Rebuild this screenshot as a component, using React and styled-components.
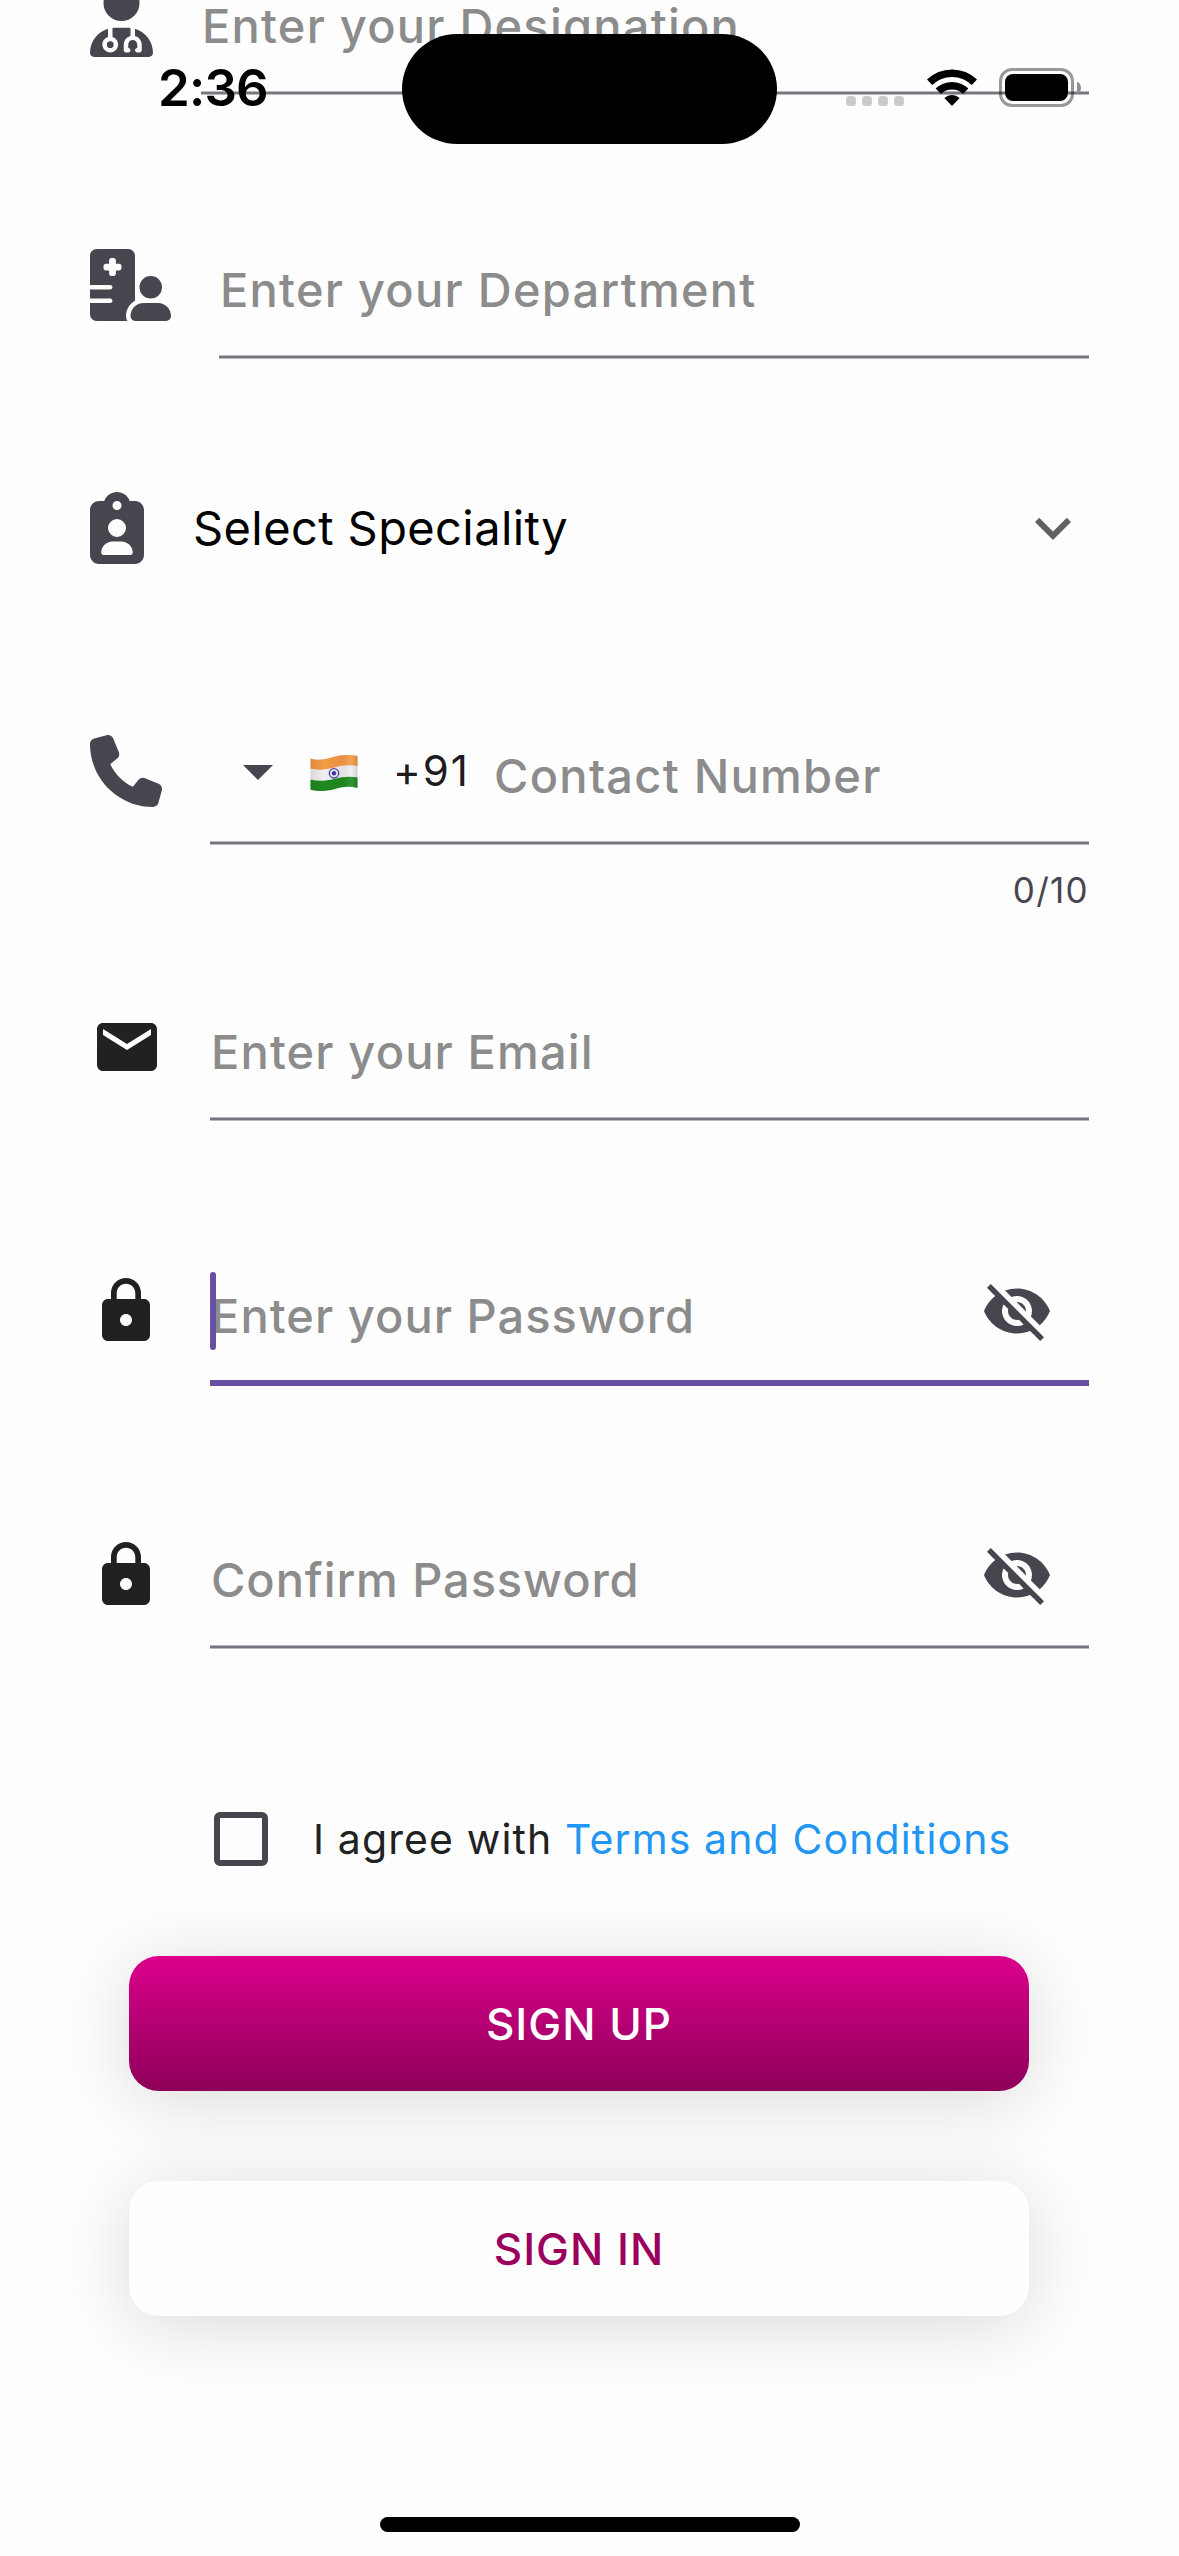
import React from "react";
import styled, { createGlobalStyle } from "styled-components";
import { FaUserDoctor, FaHospitalUser, FaClipboardUser, FaPhone } from "react-icons/fa6";
import {
  MdEmail,
  MdLock,
  MdVisibilityOff,
  MdKeyboardArrowDown,
  MdArrowDropDown,
} from "react-icons/md";

const GlobalStyle = createGlobalStyle`
  * { box-sizing: border-box; }
  body { margin: 0; background: #fefefe; }
`;

const Screen = styled.main`
  position: relative;
  width: 1179px;
  height: 2556px;
  overflow: hidden;
  background: #fefefe;
  font-family: Inter, "Liberation Sans", sans-serif;
  color: #212121;
`;

const Form = styled.form`
  display: flex;
  flex-direction: column;
  margin-top: -15px;
  padding: 0 90px;
`;

const Row = styled.div`
  display: flex;
  align-items: flex-start;
  gap: 48px;
  height: ${(p) => p.$height || 110}px;
  margin-top: ${(p) => p.$gap || 0}px;
`;

const Glyph = styled.span`
  display: flex;
  flex: none;
  width: ${(p) => p.$width || 72}px;
  height: 72px;
  margin: 0 ${(p) => -(p.$nudge || 0)}px 0 ${(p) => p.$nudge || 0}px;
  color: ${(p) => p.$color || "#49454f"};

  svg {
    width: 100%;
    height: 100%;
  }
`;

const Field = styled.div`
  position: relative;
  display: flex;
  flex: 1;
  align-items: flex-start;
  height: 100%;
`;

const Underline = styled.i`
  position: absolute;
  left: 0;
  right: 0;
  bottom: 0;
  height: ${(p) => (p.$focused ? 6 : 4)}px;
  background: ${(p) => (p.$focused ? "#6750a4" : "#79747e")};
  background-clip: padding-box;
  border: solid rgba(121, 116, 126, 0.5);
  border-width: ${(p) => (p.$focused ? "0" : "1px 0")};
`;

const Hint = styled.span`
  flex: 1;
  margin-top: 12px;
  padding-left: 1px;
  font-size: 47px;
  font-weight: 450;
  line-height: 58px;
  letter-spacing: ${(p) => p.$spacing}px;
  color: #8c8c8c;
  white-space: nowrap;
`;

const Caret = styled.i`
  position: absolute;
  left: 0;
  top: -3px;
  width: 6px;
  height: 78px;
  border-radius: 3px;
  background: #6750a4;
`;

const EyeButton = styled.span`
  display: flex;
  margin-right: 36px;
`;

const SelectText = styled.span`
  flex: 1;
  padding-left: 1px;
  font-size: 47px;
  line-height: 72px;
  letter-spacing: 0.4px;
  color: #000;
`;

const Prefix = styled.div`
  display: flex;
  align-items: center;
  height: 72px;
  padding-left: 12px;
  margin-right: 27px;
`;

const FlagIcon = styled.svg`
  width: 48px;
  height: 36px;
  margin: 3px 35px 0 16px;
`;

const DialCode = styled.span`
  width: 73px;
  font-size: 42px;
  line-height: 72px;
  letter-spacing: 2px;
  color: #1d1b20;
  white-space: nowrap;
`;

const Counter = styled.div`
  margin-top: 24px;
  font-size: 35px;
  line-height: 42px;
  letter-spacing: 1.3px;
  text-align: right;
  color: #49454f;
`;

const Agreement = styled.label`
  display: flex;
  align-items: center;
  height: 54px;
  margin: 163px 0 0 124px;
  font-size: 41px;
  letter-spacing: 1.12px;
  white-space: pre;
`;

const Box = styled.span`
  width: 54px;
  height: 54px;
  margin-right: 45px;
  border: 6px solid #49454f;
  border-radius: 6px;
`;

const Terms = styled.a`
  color: #2196f3;
`;

const Actions = styled.div`
  display: flex;
  flex-direction: column;
  gap: 90px;
  margin: 90px 60px 0 39px;
`;

const Button = styled.button`
  height: 135px;
  padding: 0;
  border: 0;
  border-radius: 30px;
  background: ${(p) =>
    p.$primary ? "linear-gradient(180deg, #dd008c 0%, #8c0058 100%)" : "#fefefe"};
  box-shadow: 0 9px 76px rgba(0, 0, 0, 0.15);
  color: ${(p) => (p.$primary ? "#ffffff" : "#9c005d")};
  font-family: inherit;
  font-size: 44px;
  font-weight: 450;
  letter-spacing: 1px;
`;

const StatusBar = styled.header`
  position: absolute;
  top: 34px;
  left: 0;
  right: 0;
  display: flex;
  align-items: center;
  height: 110px;
  padding: 0 98px 0 158px;
`;

const Clock = styled.time`
  width: 244px;
  margin-top: -2px;
  font-size: 51px;
  font-weight: 600;
  line-height: 60px;
  letter-spacing: -0.8px;
  color: #000;
`;

const Island = styled.div`
  width: 375px;
  height: 110px;
  border-radius: 55px;
  background: #000;
`;

const Indicators = styled.div`
  display: flex;
  flex: 1;
  align-items: center;
  justify-content: flex-end;
  margin-top: -3px;
`;

const Signal = styled.span`
  display: flex;
  gap: 6px;
  margin: 27px 23px 0 0;

  i {
    width: 10px;
    height: 10px;
    border-radius: 3.5px;
    background: #cbcbcb;
  }
`;

const WifiIcon = styled.svg`
  width: 50px;
  height: 37px;
  margin-right: 22px;
`;

const Battery = styled.span`
  width: 75px;
  height: 39px;
  padding: 3px;
  border: 3px solid rgba(0, 0, 0, 0.4);
  border-radius: 13px;

  &::before {
    content: "";
    display: block;
    height: 100%;
    border-radius: 8px;
    background: #000;
  }
`;

const BatteryTip = styled.span`
  width: 4px;
  height: 12px;
  margin-left: 3px;
  border-radius: 0 4px 4px 0 / 0 6px 6px 0;
  background: #8f8f8f;
`;

const HomeIndicator = styled.div`
  position: absolute;
  left: 380px;
  bottom: 24px;
  width: 420px;
  height: 15px;
  border-radius: 7.5px;
  background: #000;
`;

function IndiaFlag() {
  return (
    <FlagIcon viewBox="0 0 48 36">
      <defs>
        <clipPath id="wave">
          <path d="M0.5 3.6C8 6 15 4.600 24 1.800C33-.6 41-.6 47.500 1V33C40 31 33 31.500 25 33.900C16 36.500 8 36.500.5 34.800Z" />
        </clipPath>
        <linearGradient id="shade" x1="0" x2="1">
          <stop offset="0" stopColor="#000" stopOpacity=".1" />
          <stop offset=".3" stopColor="#000" stopOpacity="0" />
          <stop offset=".65" stopColor="#000" stopOpacity=".05" />
          <stop offset=".85" stopColor="#fff" stopOpacity=".1" />
          <stop offset="1" stopColor="#000" stopOpacity=".15" />
        </linearGradient>
      </defs>
      <g clipPath="url(#wave)">
        <rect width="48" height="36" fill="#efeff0" />
        <path d="M0-2H48V11C40 9.500 33 10 24 12.500C15 15 8 15.300 0 13.500Z" fill="#f49a45" />
        <path d="M0 24.500C8 26.500 16 26 24 24C33 21.500 40 21 48 22.500V38H0Z" fill="#1f8a1f" />
        <rect width="48" height="36" fill="url(#shade)" />
      </g>
      <circle cx="24" cy="18.300" r="4.700" fill="#e4e2f2" stroke="#4a44a6" strokeWidth="1.300" />
      <circle cx="24" cy="18.300" r="2.200" fill="#3d37a0" />
    </FlagIcon>
  );
}

function Wifi() {
  return (
    <WifiIcon viewBox="0 0 50 37" fill="none" stroke="#000">
      <path d="M2.6 13.300A32.300 32.300 0 0 1 47.400 13.300" strokeWidth="7.600" />
      <path d="M11.300 22.300A19.700 19.700 0 0 1 38.700 22.300" strokeWidth="7.600" />
      <path d="M25 36L18.200 29.200A10 10 0 0 1 31.800 29.200Z" fill="#000" strokeWidth="1.200" strokeLinejoin="round" />
    </WifiIcon>
  );
}

function PasswordField({ label, focused, spacing, ...row }) {
  return (
    <Row {...row}>
      <Glyph $color="#212121"><MdLock /></Glyph>
      <Field>
        <Hint $spacing={spacing}>{label}</Hint>
        {focused && <Caret />}
        <EyeButton><Glyph><MdVisibilityOff /></Glyph></EyeButton>
        <Underline $focused={focused} />
      </Field>
    </Row>
  );
}

export default function App() {
  return (
    <Screen>
      <GlobalStyle />
      <Form>
        <Row>
          <Glyph $width={63}><FaUserDoctor /></Glyph>
          <Field>
            <Hint $spacing={1.22}>Enter your Designation</Hint>
            <Underline />
          </Field>
        </Row>
        <Row $gap={154}>
          <Glyph $width={81}><FaHospitalUser /></Glyph>
          <Field>
            <Hint $spacing={1.25}>Enter your Department</Hint>
            <Underline />
          </Field>
        </Row>
        <Row $gap={133} $height={72}>
          <Glyph $width={54}><FaClipboardUser /></Glyph>
          <SelectText>Select Speciality</SelectText>
          <Glyph $color="#616161"><MdKeyboardArrowDown /></Glyph>
        </Row>
        <Row $gap={171}>
          <Glyph><FaPhone /></Glyph>
          <Field>
            <Prefix>
              <Glyph><MdArrowDropDown /></Glyph>
              <IndiaFlag />
              <DialCode>+91</DialCode>
            </Prefix>
            <Hint $spacing={1.25}>Contact Number</Hint>
            <Underline />
          </Field>
        </Row>
        <Counter>0/10</Counter>
        <Row $gap={100}>
          <Glyph $color="#212121" $nudge={1}><MdEmail /></Glyph>
          <Field>
            <Hint $spacing={1.15}>Enter your Email</Hint>
            <Underline />
          </Field>
        </Row>
        <PasswordField label="Enter your Password" spacing={1.05} focused $gap={154} $height={111} />
        <PasswordField label="Confirm Password" spacing={0.9} $gap={153} />
        <Agreement>
          <Box />
          {"I agree with "}
          <Terms>Terms and Conditions</Terms>
        </Agreement>
        <Actions>
          <Button type="button" $primary>SIGN UP</Button>
          <Button type="button">SIGN IN</Button>
        </Actions>
      </Form>
      <StatusBar>
        <Clock>2:36</Clock>
        <Island />
        <Indicators>
          <Signal><i /><i /><i /><i /></Signal>
          <Wifi />
          <Battery />
          <BatteryTip />
        </Indicators>
      </StatusBar>
      <HomeIndicator />
    </Screen>
  );
}
